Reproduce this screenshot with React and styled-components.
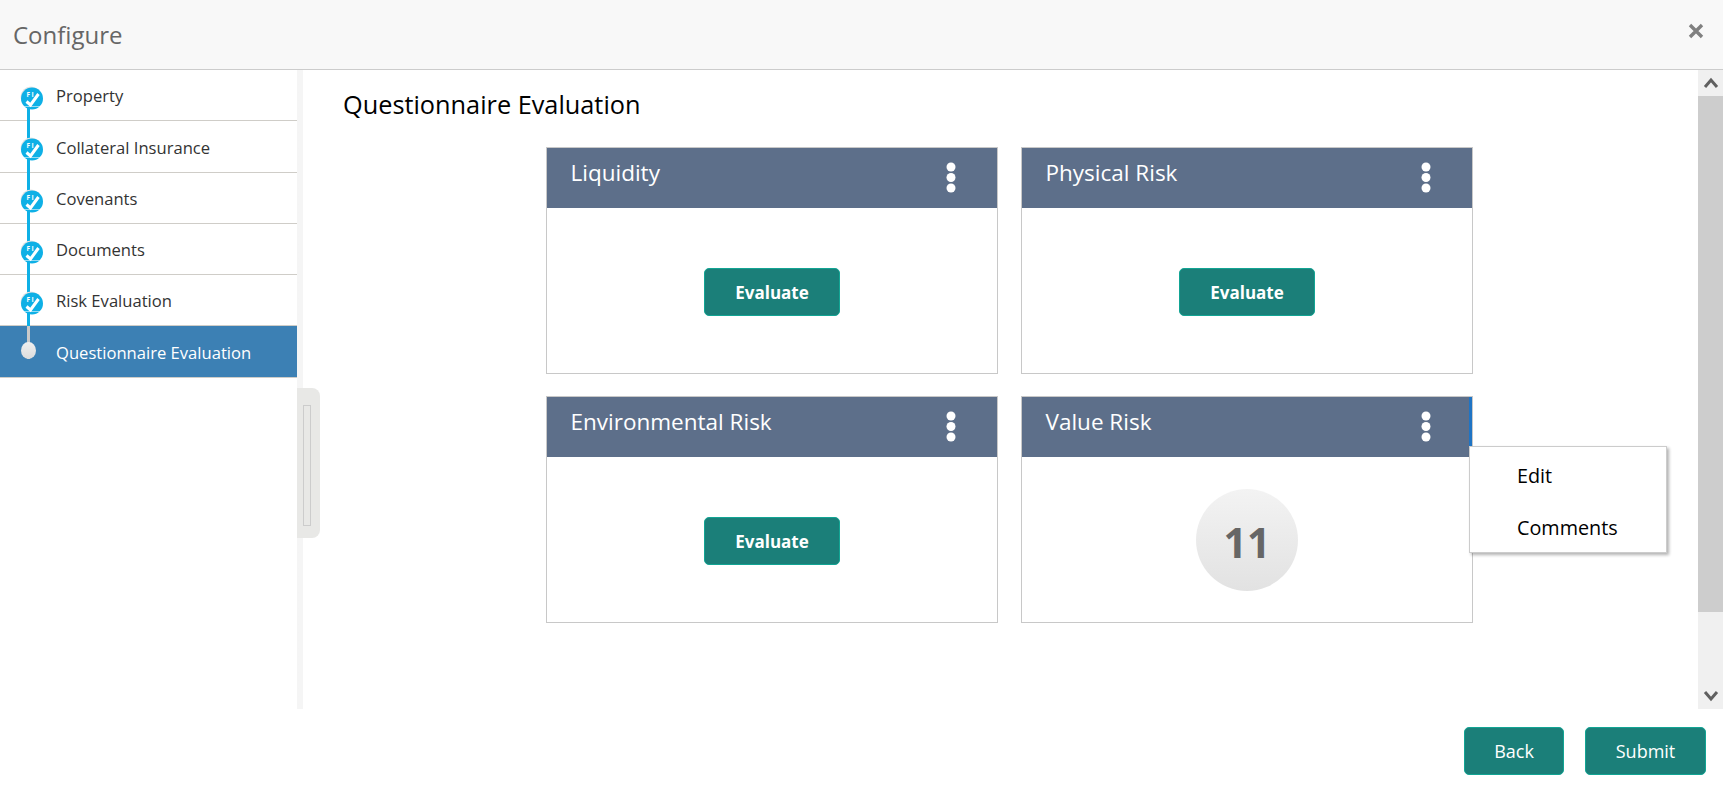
import React from 'react';
import styled, { createGlobalStyle } from 'styled-components';

const GlobalStyle = createGlobalStyle`
  html, body {
    margin: 0;
    padding: 0;
    background: #fff;
    font-family: 'Open Sans', 'Noto Sans', sans-serif;
    overflow: hidden;
  }
`;

const Page = styled.div`
  width: 1723px;
  height: 796px;
  display: flex;
  flex-direction: column;
`;

const Header = styled.header`
  height: 69px;
  flex: none;
  background: #f8f8f8;
  border-bottom: 1px solid #ccc;
  display: flex;
  align-items: center;
  justify-content: space-between;
  padding: 0 19px 0 13px;
`;

const Title = styled.h1`
  margin: 0;
  font-size: 24px;
  font-weight: 400;
  color: #666;
`;

const CloseButton = styled.button`
  border: 0;
  background: none;
  padding: 0;
  margin-bottom: 8px;
  display: flex;
  color: #808080;
`;

const Body = styled.div`
  height: 639px;
  flex: none;
  display: flex;
  position: relative;
`;

const Sidebar = styled.nav`
  width: 297px;
  flex: none;
  border-right: 6px solid;
  border-image: linear-gradient(90deg, #e0e0e0, #f5f5f5) 1;
`;

const Step = styled.div`
  height: ${p => p.$height}px;
  box-sizing: border-box;
  border-bottom: 1px solid #cfcdc8;
  background: ${p => (p.$active ? '#3c80b4' : '#fff')};
  color: ${p => (p.$active ? '#fff' : '#333')};
  display: flex;
  align-items: center;
  padding: 1px 0 0 56px;
  font-size: 16.6px;
  position: relative;
`;

const StepLine = styled.span`
  position: absolute;
  left: 27px;
  width: 3px;
  top: ${p => (p.$first ? 28 : 0)}px;
  bottom: ${p => (p.$active ? 18 : -1)}px;
  background: ${p => (p.$active ? '#c9c9c9' : '#0eb0e6')};
`;

const StepBadge = styled.svg`
  position: absolute;
  left: 20px;
  top: 16px;
`;

const StepDot = styled.span`
  position: absolute;
  left: 21px;
  top: 16px;
  width: 15px;
  height: 17px;
  border-radius: 50%;
  background: linear-gradient(#f0f0f0, #dcdcdc);
`;

const Handle = styled.div`
  position: absolute;
  left: 297px;
  top: 318px;
  width: 23px;
  height: 150px;
  box-sizing: border-box;
  background: #e8e8e6;
  border-radius: 0 8px 8px 0;
  padding: 17px 0 0 6px;
`;

const HandleGrip = styled.div`
  width: 8px;
  height: 121px;
  border: 1px solid #ccc;
  box-sizing: border-box;
`;

const Main = styled.main`
  flex: 1;
  padding: 19px 0 0 40px;
  overflow: hidden;
`;

const Heading = styled.h2`
  margin: 0 0 28px;
  height: 30px;
  line-height: 30px;
  font-size: 25.3px;
  font-weight: 400;
  color: #000;
`;

const CardGrid = styled.div`
  display: grid;
  grid-template-columns: 452px 452px;
  column-gap: 23px;
  row-gap: 22px;
  margin-left: 203px;
`;

const Card = styled.section`
  height: 227px;
  box-sizing: border-box;
  border: 1px solid #c8c8c8;
  background: #fff;
  display: flex;
  flex-direction: column;
  position: relative;
`;

const CardHead = styled.div`
  height: 60px;
  box-sizing: border-box;
  flex: none;
  background: #5d6f8a;
  color: #fff;
  display: flex;
  justify-content: space-between;
  padding: 9px 41px 0 23.5px;
  font-size: 22.5px;
`;

const Kebab = styled.svg`
  margin-top: 5px;
`;

const FocusEdge = styled.span`
  position: absolute;
  top: 0;
  right: 0;
  width: 3px;
  height: 49px;
  background: #1f74c4;
`;

const CardBody = styled.div`
  flex: 1;
  display: flex;
  align-items: center;
  justify-content: center;
  padding-top: ${p => (p.$score ? 0 : 2)}px;
`;

const ActionButton = styled.button`
  height: 48px;
  width: ${p => p.$width}px;
  box-sizing: border-box;
  border: 1px solid #12a594;
  border-radius: 5px;
  background: #1b7f79;
  color: #fff;
  font-family: inherit;
  font-size: ${p => (p.$bold ? 17 : 18)}px;
  font-weight: ${p => (p.$bold ? 700 : 400)};
  padding: ${p => (p.$bold ? '2px 0 0' : 0)};
`;

const Score = styled.div`
  width: 102px;
  height: 102px;
  box-sizing: border-box;
  padding-top: 4px;
  border-radius: 50%;
  background: linear-gradient(#f3f3f3, #e2e2e2);
  color: #666;
  font-size: 41px;
  font-weight: 700;
  display: flex;
  align-items: center;
  justify-content: center;
`;

const Menu = styled.ul`
  position: absolute;
  left: 447px;
  top: 49px;
  width: 198px;
  height: 107px;
  box-sizing: border-box;
  margin: 0;
  padding: 4px 0 0 47px;
  list-style: none;
  background: #fff;
  border: 1px solid #ccc;
  box-shadow: 2px 2px 3px rgba(0, 0, 0, 0.3);
  color: #000;
  font-size: 19.8px;
`;

const MenuItem = styled.li`
  height: 52px;
  line-height: 50px;
`;

const Scrollbar = styled.div`
  width: 25px;
  flex: none;
  background: #f0f0f0;
  display: flex;
  flex-direction: column;
`;

const ScrollArrow = styled.div`
  height: 26px;
  flex: none;
  display: flex;
  align-items: center;
  justify-content: center;
  color: #606060;
`;

const ScrollThumb = styled.div`
  height: 516px;
  background: #cdcdcd;
`;

const ScrollTrack = styled.div`
  flex: 1;
`;

const Footer = styled.footer`
  flex: 1;
  display: flex;
  justify-content: flex-end;
  gap: 21px;
  padding: 18px 17px 0 0;
`;

const steps = [
  { label: 'Property', height: 51 },
  { label: 'Collateral Insurance', height: 52 },
  { label: 'Covenants', height: 51 },
  { label: 'Documents', height: 51 },
  { label: 'Risk Evaluation', height: 51 },
];

const cards = [
  { title: 'Liquidity' },
  { title: 'Physical Risk' },
  { title: 'Environmental Risk' },
  { title: 'Value Risk', score: 11, menu: true },
];

function Badge() {
  return (
    <StepBadge width="24" height="24" viewBox="0 0 24 24">
      <circle cx="11" cy="11" r="10.5" fill="#e4e4e4" />
      <circle cx="12" cy="12.5" r="11" fill="#0eb0e6" />
      <path d="M6.5 15.5l4 3.5 8-11" fill="none" stroke="#fff" strokeWidth="3" />
      <path d="M4 20.5h16" stroke="#fff" strokeWidth="0.8" opacity="0.7" />
      <text x="6.5" y="10.5" fontSize="6.5" fontWeight="700" letterSpacing="1.4" fill="#fff" fontFamily="Open Sans">
        FI
      </text>
    </StepBadge>
  );
}

function App() {
  return (
    <Page>
      <GlobalStyle />
      <Header>
        <Title>Configure</Title>
        <CloseButton aria-label="Close">
          <svg width="16" height="16" viewBox="0 0 16 16">
            <path d="M2 2l12 12M14 2L2 14" stroke="currentColor" strokeWidth="3.4" />
          </svg>
        </CloseButton>
      </Header>
      <Body>
        <Sidebar>
          {steps.map((step, i) => (
            <Step key={step.label} $height={step.height}>
              <StepLine $first={i === 0} />
              <Badge />
              {step.label}
            </Step>
          ))}
          <Step $active $height={52}>
            <StepLine $active />
            <StepDot />
            Questionnaire Evaluation
          </Step>
        </Sidebar>
        <Handle>
          <HandleGrip />
        </Handle>
        <Main>
          <Heading>Questionnaire Evaluation</Heading>
          <CardGrid>
            {cards.map(card => (
              <Card key={card.title}>
                <CardHead>
                  {card.title}
                  <Kebab width="10" height="32" viewBox="0 0 10 32">
                    <circle cx="5" cy="5" r="4.5" fill="#fff" />
                    <circle cx="5" cy="15.5" r="4.5" fill="#fff" />
                    <circle cx="5" cy="26" r="4.5" fill="#fff" />
                  </Kebab>
                </CardHead>
                <CardBody $score={card.score}>
                  {card.score ? (
                    <Score>{card.score}</Score>
                  ) : (
                    <ActionButton $width={136} $bold>Evaluate</ActionButton>
                  )}
                </CardBody>
                {card.menu && (
                  <>
                    <FocusEdge />
                    <Menu>
                      <MenuItem>Edit</MenuItem>
                      <MenuItem>Comments</MenuItem>
                    </Menu>
                  </>
                )}
              </Card>
            ))}
          </CardGrid>
        </Main>
        <Scrollbar>
          <ScrollArrow>
            <svg width="16" height="12" viewBox="0 0 16 12">
              <path d="M2 10l6-7 6 7" fill="none" stroke="currentColor" strokeWidth="3" />
            </svg>
          </ScrollArrow>
          <ScrollThumb />
          <ScrollTrack />
          <ScrollArrow>
            <svg width="16" height="12" viewBox="0 0 16 12">
              <path d="M2 2l6 7 6-7" fill="none" stroke="currentColor" strokeWidth="3" />
            </svg>
          </ScrollArrow>
        </Scrollbar>
      </Body>
      <Footer>
        <ActionButton $width={100}>Back</ActionButton>
        <ActionButton $width={121}>Submit</ActionButton>
      </Footer>
    </Page>
  );
}

export default App;
